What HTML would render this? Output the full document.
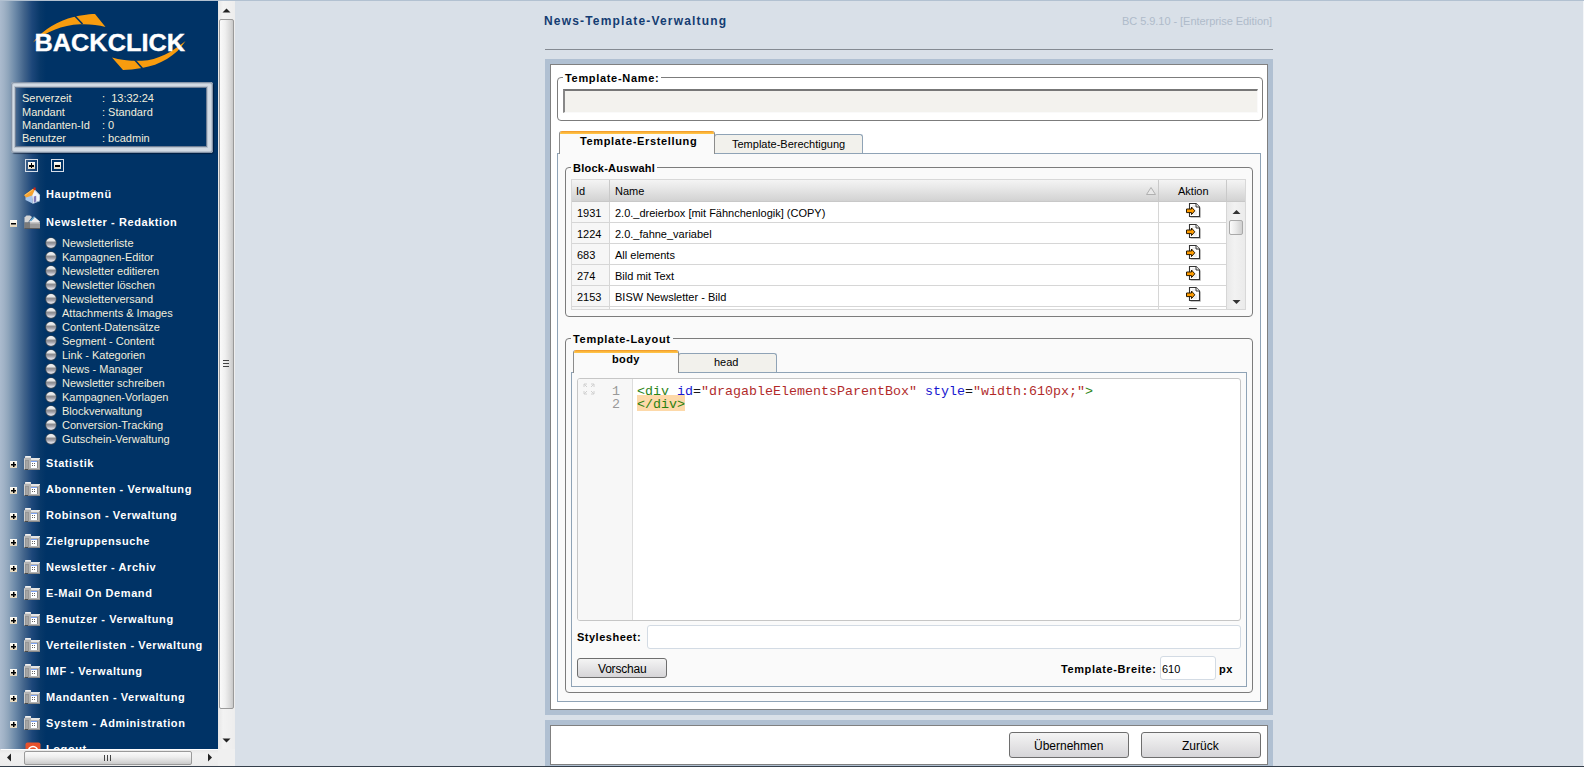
<!DOCTYPE html>
<html><head><meta charset="utf-8">
<style>
*{box-sizing:border-box}
html,body{margin:0;padding:0}
body{width:1584px;height:767px;overflow:hidden;position:relative;background:#d9e0e8;font-family:"Liberation Sans",sans-serif;font-size:11px;color:#000}
.a{position:absolute}
.t{position:absolute;white-space:nowrap;line-height:1}
/* sidebar */
#side{left:0;top:1px;width:218px;height:748px;background:linear-gradient(to right,#abbbce 0px,#a0b2c6 4px,#90a6bc 8px,#6886a6 16px,#42648b 24px,#1d477a 32px,#083869 40px,#003366 46px,#003366 218px);overflow:hidden}
.info{left:11px;top:83px;width:200px;height:70px;border:5px solid #c5ced9;border-radius:3px;box-shadow:inset 1px 1px 0 #8b9ab0, 1px 1px 0 #7c8aa0}
.si{color:#f2eedc;font-size:11px}
.tb{color:#fff;font-weight:bold;font-size:11px;letter-spacing:0.58px}
.ts{color:#f2eedc;font-size:11px}
.bul{width:10px;height:10px;border-radius:50%;background:linear-gradient(#f4f4f4 0,#e6e6e6 25%,#8e8e92 45%,#9c9ca4 60%,#d6d6de 85%,#c8c8d0 100%);box-shadow:0 0 0 0.6px #5a5448}
.pm{width:7px;height:7px;background:linear-gradient(#fffef8,#f4eee0 50%,#e2d3b6);}
.pm:before{content:"";position:absolute;left:1px;top:3px;width:5px;height:1px;background:#000;box-shadow:0 0.5px 0 #000}
.pm.p:after{content:"";position:absolute;left:3px;top:1px;width:1px;height:5px;background:#000;box-shadow:0.5px 0 0 #000}
/* main */
.frame{background:#b0c0d2}
.inner{background:#fff;border-top:1px solid #808080;border-left:1px solid #808080}
.fs{border:1px solid #7c7c7c;border-radius:4px}
.lg{font-weight:bold;background:inherit;padding:0 2px}
.btn{border:1px solid #6e6e6e;border-radius:3px;background:linear-gradient(#f4f4f4,#d6d5d8);text-align:center;font-size:12px}
</style></head><body>
<div class="a" style="left:0;top:0;width:1584px;height:1px;background:#b2c1d1"></div>

<!-- SIDEBAR -->
<svg width="0" height="0" style="position:absolute"><defs>
<symbol id="fold" viewBox="0 0 17 16" shape-rendering="crispEdges">
<rect x="1" y="0" width="6" height="3" fill="#dcdcdc"/>
<rect x="2" y="0" width="4" height="1" fill="#f2f2f2"/>
<rect x="0" y="2" width="16" height="12" fill="#b4b4b4"/>
<rect x="7" y="2" width="9" height="2" fill="#e6e6e6"/>
<rect x="0" y="3" width="1" height="11" fill="#cfcfcf"/>
<rect x="1" y="4" width="4" height="10" fill="#969696"/>
<rect x="2" y="5" width="2" height="8" fill="#a4a4a4"/>
<rect x="15" y="3" width="1" height="11" fill="#9a9a9a"/>
<rect x="0" y="13" width="16" height="1" fill="#8a8a8a"/>
<rect x="1" y="13" width="3" height="1" fill="#4a4a4a"/>
<rect x="7" y="5" width="6" height="7" fill="#ffffff"/>
<rect x="7" y="5" width="6" height="1" fill="#7ea4f4"/>
<rect x="13" y="5" width="1" height="7" fill="#8a8a8a"/>
<rect x="8" y="7" width="1" height="1" fill="#666"/><rect x="10" y="7" width="1" height="1" fill="#666"/>
<rect x="8" y="9" width="1" height="1" fill="#666"/><rect x="10" y="9" width="1" height="1" fill="#666"/>
</symbol>
<symbol id="ico" viewBox="0 0 15 16">
<path d="M4.5 14.5 L14.5 14.5 L14.5 4.5" stroke="#c4c4c4" stroke-width="1" fill="none"/>
<path d="M3.5 0.5 L10 0.5 L13.5 4 L13.5 13.5 L3.5 13.5 Z" fill="#fff" stroke="#333" stroke-width="1.1"/>
<path d="M10 0.5 L10 4 L13.5 4" fill="#f4f4f4" stroke="#333" stroke-width="1"/>
<path d="M6 3 L9 3 M8 9 L11 9 M7 11 L11 11" stroke="#d8d8d8" stroke-width="0.8"/>
<path d="M0.5 6 L5.5 6 L5.5 4 L8.8 7.8 L5.5 11.6 L5.5 9.6 L0.5 9.6 Z" fill="#ff9c00" stroke="#2a1a00" stroke-width="1"/>
</symbol>
</defs></svg>
<div id="side" class="a">
<svg class="a" style="left:0;top:-1px" width="218" height="80" viewBox="0 0 218 80">
<path d="M33 42.5 C40 33 52 24 68 18.5 C78 15.5 88 14 95 14 L105.5 27 C98 25 90 24 80 24.3 C62 25 46 32 33 42.5 Z" fill="#f89c0e"/>
<path d="M74 15 L82.5 24" stroke="#003366" stroke-width="1.6"/>
<path d="M112 57.5 C120 60 130 61 142 60.8 C158 60 172 52 185.5 41 C176 56 160 65 142 68 C135 69 128 70 123 70 Z" fill="#f89c0e"/>
<path d="M134 59 L142.5 68.5" stroke="#003366" stroke-width="1.6"/>
<text x="34.5" y="50.6" font-family="Liberation Sans" font-weight="bold" font-size="23.3" fill="#fff" stroke="#fff" stroke-width="0.35" textLength="150.5" lengthAdjust="spacingAndGlyphs">BACKCLICK</text>
</svg>
<div class="a" style="left:11px;top:81px;width:202px;height:71px;background:#d3dbe4;border-radius:3px;box-shadow:inset 0 0 0 1px #8594a8, inset 0 0 0 2px #b9c4d0, 1px 1px 1px rgba(0,10,30,.5)"></div>
<div class="a" style="left:16px;top:87px;width:190px;height:58px;background:linear-gradient(to right,#46688f 0,#1f4a7a 5px,#003366 11px);box-shadow:0 0 0 1px #6f7f96, 0 0 0 2px #b7c2ce"></div>
<div class="t si" style="left:22px;top:92px">Serverzeit</div><div class="t si" style="left:102px;top:92px">:&nbsp;&nbsp;13:32:24</div>
<div class="t si" style="left:22px;top:106px">Mandant</div><div class="t si" style="left:102px;top:106px">: Standard</div>
<div class="t si" style="left:22px;top:119px">Mandanten-Id</div><div class="t si" style="left:102px;top:119px">: 0</div>
<div class="t si" style="left:22px;top:132px">Benutzer</div><div class="t si" style="left:102px;top:132px">: bcadmin</div>
<div class="a" style="left:25px;top:158px;width:13px;height:13px;border:1px solid #d5dde8"><div class="a" style="left:2px;top:2px;width:7px;height:7px;background:linear-gradient(#fffef9,#e6dac3)"><div class="a" style="left:1px;top:3px;width:5px;height:1.5px;background:#000"></div><div class="a" style="left:2.75px;top:1px;width:1.5px;height:5px;background:#000"></div></div></div>
<div class="a" style="left:51px;top:158px;width:13px;height:13px;border:1px solid #d5dde8"><div class="a" style="left:2px;top:2px;width:7px;height:7px;background:linear-gradient(#fffef9,#e6dac3)"><div class="a" style="left:1px;top:3px;width:5px;height:1.5px;background:#000"></div></div></div>
<svg class="a" style="left:24px;top:186px" width="17" height="17" viewBox="0 0 17 17">
<path d="M1.5 8.5 L8.5 6 L8.5 16.5 L1.5 13 Z" fill="#a6c6ee"/>
<path d="M8.5 12.5 L8.5 16.5 L15.8 13.5 L15.8 8 L10.5 2.5 L8 7 Z" fill="#eef4fc"/>
<path d="M8.5 16.5 L15.8 13.5 L15.8 14.2 L8.5 17 Z" fill="#c9d8ec"/>
<path d="M9.8 9.6 L12.2 8.8 L12.2 14.6 L9.8 15.5 Z" fill="#8078b8"/>
<path d="M0 8.2 L9 1.8 L11 2.6 L8.2 8.5 L2.2 10.6 Z" fill="#f7a331"/>
<path d="M0.5 8 L9 2 L9.6 2.4 L1.2 8.6 Z" fill="#ffc766"/>
<path d="M10.6 2.6 L16.2 8.2 L15.6 8.8 L10.4 3.6 Z" fill="#c3d3e8"/>
<rect x="9.6" y="0.5" width="2" height="2.6" fill="#d9240f"/>
</svg><div class="t tb" style="left:46px;top:188px">Hauptmenü</div>
<div class="a pm" style="left:10px;top:219px"></div><svg class="a" style="left:24px;top:214px" width="17" height="15" viewBox="0 0 17 15">
<path d="M0.5 2.5 L2.5 0.5 L6 0.5 L8 2 L4 7.5 L0.5 7.5 Z" fill="#d4d4d4"/>
<path d="M5 7 L10 1.5 L16 6.5 L12 11 Z" fill="#ececec"/>
<path d="M6.5 6 L10.3 2" stroke="#55a0cc" stroke-width="1.2"/>
<path d="M0.5 7.5 L16 7.5 L16 13.5 L0.5 13.5 Z" fill="#9a9a9a"/>
<path d="M0.5 7.5 L6 7.5 L6 13.5 L0.5 13.5 Z" fill="#7a7a7a"/>
<path d="M0.5 13 L16 13 L16 14 L0.5 14 Z" fill="#5a5a5a"/>
<path d="M6 7.5 L16 7.5 L16 8.5 L6 8.5 Z" fill="#c8c8c8"/>
</svg><div class="t tb" style="left:46px;top:216px">Newsletter - Redaktion</div>
<div class="a bul" style="left:46px;top:237px"></div><div class="t ts" style="left:62px;top:237px">Newsletterliste</div>
<div class="a bul" style="left:46px;top:251px"></div><div class="t ts" style="left:62px;top:251px">Kampagnen-Editor</div>
<div class="a bul" style="left:46px;top:265px"></div><div class="t ts" style="left:62px;top:265px">Newsletter editieren</div>
<div class="a bul" style="left:46px;top:279px"></div><div class="t ts" style="left:62px;top:279px">Newsletter löschen</div>
<div class="a bul" style="left:46px;top:293px"></div><div class="t ts" style="left:62px;top:293px">Newsletterversand</div>
<div class="a bul" style="left:46px;top:307px"></div><div class="t ts" style="left:62px;top:307px">Attachments &amp; Images</div>
<div class="a bul" style="left:46px;top:321px"></div><div class="t ts" style="left:62px;top:321px">Content-Datensätze</div>
<div class="a bul" style="left:46px;top:335px"></div><div class="t ts" style="left:62px;top:335px">Segment - Content</div>
<div class="a bul" style="left:46px;top:349px"></div><div class="t ts" style="left:62px;top:349px">Link - Kategorien</div>
<div class="a bul" style="left:46px;top:363px"></div><div class="t ts" style="left:62px;top:363px">News - Manager</div>
<div class="a bul" style="left:46px;top:377px"></div><div class="t ts" style="left:62px;top:377px">Newsletter schreiben</div>
<div class="a bul" style="left:46px;top:391px"></div><div class="t ts" style="left:62px;top:391px">Kampagnen-Vorlagen</div>
<div class="a bul" style="left:46px;top:405px"></div><div class="t ts" style="left:62px;top:405px">Blockverwaltung</div>
<div class="a bul" style="left:46px;top:419px"></div><div class="t ts" style="left:62px;top:419px">Conversion-Tracking</div>
<div class="a bul" style="left:46px;top:433px"></div><div class="t ts" style="left:62px;top:433px">Gutschein-Verwaltung</div>
<div class="a pm p" style="left:10px;top:460px"></div><svg class="a" style="left:24px;top:455px" width="17" height="16"><use href="#fold"/></svg><div class="t tb" style="left:46px;top:457px">Statistik</div>
<div class="a pm p" style="left:10px;top:486px"></div><svg class="a" style="left:24px;top:481px" width="17" height="16"><use href="#fold"/></svg><div class="t tb" style="left:46px;top:483px">Abonnenten - Verwaltung</div>
<div class="a pm p" style="left:10px;top:512px"></div><svg class="a" style="left:24px;top:507px" width="17" height="16"><use href="#fold"/></svg><div class="t tb" style="left:46px;top:509px">Robinson - Verwaltung</div>
<div class="a pm p" style="left:10px;top:538px"></div><svg class="a" style="left:24px;top:533px" width="17" height="16"><use href="#fold"/></svg><div class="t tb" style="left:46px;top:535px">Zielgruppensuche</div>
<div class="a pm p" style="left:10px;top:564px"></div><svg class="a" style="left:24px;top:559px" width="17" height="16"><use href="#fold"/></svg><div class="t tb" style="left:46px;top:561px">Newsletter - Archiv</div>
<div class="a pm p" style="left:10px;top:590px"></div><svg class="a" style="left:24px;top:585px" width="17" height="16"><use href="#fold"/></svg><div class="t tb" style="left:46px;top:587px">E-Mail On Demand</div>
<div class="a pm p" style="left:10px;top:616px"></div><svg class="a" style="left:24px;top:611px" width="17" height="16"><use href="#fold"/></svg><div class="t tb" style="left:46px;top:613px">Benutzer - Verwaltung</div>
<div class="a pm p" style="left:10px;top:642px"></div><svg class="a" style="left:24px;top:637px" width="17" height="16"><use href="#fold"/></svg><div class="t tb" style="left:46px;top:639px">Verteilerlisten - Verwaltung</div>
<div class="a pm p" style="left:10px;top:668px"></div><svg class="a" style="left:24px;top:663px" width="17" height="16"><use href="#fold"/></svg><div class="t tb" style="left:46px;top:665px">IMF - Verwaltung</div>
<div class="a pm p" style="left:10px;top:694px"></div><svg class="a" style="left:24px;top:689px" width="17" height="16"><use href="#fold"/></svg><div class="t tb" style="left:46px;top:691px">Mandanten - Verwaltung</div>
<div class="a pm p" style="left:10px;top:720px"></div><svg class="a" style="left:24px;top:715px" width="17" height="16"><use href="#fold"/></svg><div class="t tb" style="left:46px;top:717px">System - Administration</div>
<svg class="a" style="left:25px;top:741px" width="16" height="16" viewBox="0 0 16 16"><rect x="0.5" y="0.5" width="15" height="15" rx="2" fill="#e8522c"/><circle cx="8" cy="9" r="4.5" fill="none" stroke="#fff" stroke-width="1.6"/></svg><div class="t tb" style="left:46px;top:743px">Logout</div>
</div>


<!-- sidebar scrollbars -->
<div class="a" style="left:218px;top:1px;width:17px;height:748px;background:linear-gradient(to right,#e6e6e6,#f3f3f3 30%,#ededed)"></div>
<svg class="a" style="left:218px;top:5px" width="17" height="10" viewBox="0 0 17 10"><path d="M4.5 7.5 L8.5 3.5 L12.5 7.5 Z" fill="#222"/></svg>
<div class="a" style="left:219px;top:19px;width:15px;height:690px;border:1px solid #9a9a9a;border-radius:2px;background:linear-gradient(to right,#fafafa,#efefef 40%,#d8d8d8 80%,#c8c8c8)"></div>
<div class="a" style="left:223px;top:360px;width:6px;height:1px;background:#444"></div>
<div class="a" style="left:223px;top:363px;width:6px;height:1px;background:#444"></div>
<div class="a" style="left:223px;top:366px;width:6px;height:1px;background:#444"></div>
<svg class="a" style="left:218px;top:736px" width="17" height="10" viewBox="0 0 17 10"><path d="M4.5 2.5 L12.5 2.5 L8.5 6.5 Z" fill="#222"/></svg>
<div class="a" style="left:0;top:749px;width:235px;height:17px;background:linear-gradient(#e6e6e6,#f1f1f1 30%,#ececec)"></div>
<div class="a" style="left:218px;top:749px;width:17px;height:17px;background:#f0f0f0"></div>
<div class="a" style="left:1px;top:749px;width:217px;height:1px;background:#fff"></div>
<svg class="a" style="left:2px;top:749px" width="12" height="17" viewBox="0 0 12 17"><path d="M9 4.5 L9 12.5 L5 8.5 Z" fill="#222"/></svg>
<div class="a" style="left:24px;top:751px;width:168px;height:14px;border:1px solid #9a9a9a;border-radius:2px;background:linear-gradient(#fafafa,#efefef 40%,#d8d8d8 80%,#cacaca)"></div>
<div class="a" style="left:104px;top:755px;width:1px;height:6px;background:#444"></div>
<div class="a" style="left:107px;top:755px;width:1px;height:6px;background:#444"></div>
<div class="a" style="left:110px;top:755px;width:1px;height:6px;background:#444"></div>
<svg class="a" style="left:204px;top:749px" width="12" height="17" viewBox="0 0 12 17"><path d="M4 4.5 L8 8.5 L4 12.5 Z" fill="#222"/></svg>
<!-- MAIN -->
<div class="t" style="left:544px;top:15px;font-weight:bold;font-size:12px;letter-spacing:1.17px;color:#143c72">News-Template-Verwaltung</div>
<div class="t" style="left:1122px;top:16px;color:#afbbca;letter-spacing:-0.05px">BC 5.9.10 - [Enterprise Edition]</div>
<div class="a" style="left:545px;top:49px;width:728px;height:1px;background:#848a92"></div>

<div class="a frame" style="left:545px;top:59px;width:728px;height:656px"></div>
<div class="a inner" style="left:550px;top:64px;width:718px;height:646px;border-right:1px solid #808080;border-bottom:1px solid #808080"></div>

<div class="a frame" style="left:545px;top:720px;width:728px;height:47px"></div>
<div class="a inner" style="left:550px;top:725px;width:718px;height:40px;border-bottom:1px solid #808080;border-right:1px solid #808080"></div>
<!-- Template-Name fieldset -->
<div class="a fs" style="left:557px;top:77px;width:706px;height:44px;background:#fff"></div>
<div class="t lg" style="left:563px;top:73px;background:#fff;letter-spacing:0.68px">Template-Name:</div>
<div class="a" style="left:563px;top:89px;width:695px;height:24px;background:#f3f2ee;border-top:2px solid #777;border-left:2px solid #888;border-bottom:1px solid #fafafa;border-right:1px solid #fafafa"></div>

<!-- tabs -->
<div class="a" style="left:557px;top:153px;width:704px;height:549px;background:#fafafa;border:1px solid #8fa3b6"></div>
<div class="a" style="left:714px;top:134px;width:149px;height:19px;background:#f2f1ec;border:1px solid #8fa3b6;border-left-color:#8c8c8c;border-bottom:none;border-radius:3px 3px 0 0"></div>
<div class="t" style="left:732px;top:139px">Template-Berechtigung</div>
<div class="a" style="left:559px;top:131px;width:156px;height:23px;background:#fafafa;border-left:1px solid #8c8c8c;border-right:1px solid #8c8c8c;border-radius:3px 3px 0 0;overflow:hidden"><div class="a" style="left:-1px;top:0;width:156px;height:3px;background:linear-gradient(#ee9528,#fbb43a 50%,#ffc84a)"></div></div>
<div class="t" style="left:580px;top:136px;font-weight:bold;letter-spacing:0.65px">Template-Erstellung</div>

<!-- Block-Auswahl -->
<div class="a fs" style="left:565px;top:167px;width:688px;height:150px"></div>
<div class="t lg" style="left:571px;top:163px;background:#fafafa;letter-spacing:0.25px">Block-Auswahl</div>
<div class="a" style="left:571px;top:179px;width:675px;height:131px;background:#fff;border:1px solid #d8d8d8;overflow:hidden">
<div class="a" style="left:0;top:0;width:674px;height:22px;background:linear-gradient(#f4f4f4,#e7e7e7 40%,#d2d2d2);border-bottom:1px solid #c8c8c8"></div>
<div class="a" style="left:37px;top:0;width:1px;height:22px;background:#c9c9c9"></div>
<div class="a" style="left:586px;top:0;width:1px;height:22px;background:#c9c9c9"></div>
<div class="a" style="left:654px;top:0;width:1px;height:22px;background:#c9c9c9"></div>
<div class="t" style="left:4px;top:6px">Id</div>
<div class="t" style="left:43px;top:6px">Name</div>
<div class="t" style="left:606px;top:6px">Aktion</div>
<svg class="a" style="left:574px;top:7px" width="10" height="8" viewBox="0 0 10 8"><path d="M5 0.5 L9.5 7.5 L0.5 7.5 Z" fill="#e8e8e8" stroke="#b0b0b0" stroke-width="1"/></svg>
<div class="a" style="left:0;top:22px;width:37px;height:20px;background:#f6f6f6"></div>
<div class="a" style="left:0;top:42px;width:654px;height:1px;background:#d6d6d6"></div>
<div class="a" style="left:37px;top:22px;width:1px;height:21px;background:#d6d6d6"></div>
<div class="a" style="left:586px;top:22px;width:1px;height:21px;background:#d6d6d6"></div>
<div class="a" style="left:654px;top:22px;width:1px;height:21px;background:#d6d6d6"></div>
<div class="t" style="left:5px;top:28px">1931</div>
<div class="t" style="left:43px;top:28px">2.0._dreierbox [mit Fähnchenlogik] (COPY)</div>
<svg class="a" style="left:614px;top:23px" width="15" height="16"><use href="#ico"/></svg>
<div class="a" style="left:0;top:43px;width:37px;height:20px;background:#f6f6f6"></div>
<div class="a" style="left:0;top:63px;width:654px;height:1px;background:#d6d6d6"></div>
<div class="a" style="left:37px;top:43px;width:1px;height:21px;background:#d6d6d6"></div>
<div class="a" style="left:586px;top:43px;width:1px;height:21px;background:#d6d6d6"></div>
<div class="a" style="left:654px;top:43px;width:1px;height:21px;background:#d6d6d6"></div>
<div class="t" style="left:5px;top:49px">1224</div>
<div class="t" style="left:43px;top:49px">2.0._fahne_variabel</div>
<svg class="a" style="left:614px;top:44px" width="15" height="16"><use href="#ico"/></svg>
<div class="a" style="left:0;top:64px;width:37px;height:20px;background:#f6f6f6"></div>
<div class="a" style="left:0;top:84px;width:654px;height:1px;background:#d6d6d6"></div>
<div class="a" style="left:37px;top:64px;width:1px;height:21px;background:#d6d6d6"></div>
<div class="a" style="left:586px;top:64px;width:1px;height:21px;background:#d6d6d6"></div>
<div class="a" style="left:654px;top:64px;width:1px;height:21px;background:#d6d6d6"></div>
<div class="t" style="left:5px;top:70px">683</div>
<div class="t" style="left:43px;top:70px">All elements</div>
<svg class="a" style="left:614px;top:65px" width="15" height="16"><use href="#ico"/></svg>
<div class="a" style="left:0;top:85px;width:37px;height:20px;background:#f6f6f6"></div>
<div class="a" style="left:0;top:105px;width:654px;height:1px;background:#d6d6d6"></div>
<div class="a" style="left:37px;top:85px;width:1px;height:21px;background:#d6d6d6"></div>
<div class="a" style="left:586px;top:85px;width:1px;height:21px;background:#d6d6d6"></div>
<div class="a" style="left:654px;top:85px;width:1px;height:21px;background:#d6d6d6"></div>
<div class="t" style="left:5px;top:91px">274</div>
<div class="t" style="left:43px;top:91px">Bild mit Text</div>
<svg class="a" style="left:614px;top:86px" width="15" height="16"><use href="#ico"/></svg>
<div class="a" style="left:0;top:106px;width:37px;height:20px;background:#f6f6f6"></div>
<div class="a" style="left:0;top:126px;width:654px;height:1px;background:#d6d6d6"></div>
<div class="a" style="left:37px;top:106px;width:1px;height:21px;background:#d6d6d6"></div>
<div class="a" style="left:586px;top:106px;width:1px;height:21px;background:#d6d6d6"></div>
<div class="a" style="left:654px;top:106px;width:1px;height:21px;background:#d6d6d6"></div>
<div class="t" style="left:5px;top:112px">2153</div>
<div class="t" style="left:43px;top:112px">BISW Newsletter - Bild</div>
<svg class="a" style="left:614px;top:107px" width="15" height="16"><use href="#ico"/></svg>
<div class="a" style="left:0;top:127px;width:37px;height:20px;background:#f6f6f6"></div>
<div class="a" style="left:0;top:147px;width:654px;height:1px;background:#d6d6d6"></div>
<div class="a" style="left:37px;top:127px;width:1px;height:21px;background:#d6d6d6"></div>
<div class="a" style="left:586px;top:127px;width:1px;height:21px;background:#d6d6d6"></div>
<div class="a" style="left:654px;top:127px;width:1px;height:21px;background:#d6d6d6"></div>
<svg class="a" style="left:614px;top:128px" width="15" height="16"><use href="#ico"/></svg>
<div class="a" style="left:655px;top:22px;width:19px;height:110px;background:linear-gradient(to right,#e9e9e9,#f2f2f2 40%,#eaeaea)"></div>
<svg class="a" style="left:655px;top:27px" width="19" height="10" viewBox="0 0 19 10"><path d="M5.5 7 L9.5 3 L13.5 7 Z" fill="#333"/></svg>
<div class="a" style="left:657px;top:40px;width:14px;height:15px;border:1px solid #a9a9a9;border-radius:2px;background:linear-gradient(to right,#fbfbfb,#e9e9e9 50%,#cfcfcf)"></div>
<svg class="a" style="left:655px;top:117px" width="19" height="10" viewBox="0 0 19 10"><path d="M5.5 3 L13.5 3 L9.5 7 Z" fill="#333"/></svg>
</div>

<!-- Template-Layout -->
<div class="a fs" style="left:565px;top:338px;width:688px;height:355px"></div>
<div class="t lg" style="left:571px;top:334px;background:#fafafa;letter-spacing:0.7px">Template-Layout</div>
<div class="a" style="left:571px;top:372px;width:676px;height:315px;background:#fafafa;border:1px solid #8fa3b6"></div>
<div class="a" style="left:678px;top:353px;width:99px;height:19px;background:#f2f1ec;border:1px solid #8fa3b6;border-left-color:#8c8c8c;border-bottom:none;border-radius:3px 3px 0 0"></div>
<div class="t" style="left:714px;top:357px">head</div>
<div class="a" style="left:573px;top:350px;width:106px;height:23px;background:#fafafa;border-left:1px solid #8c8c8c;border-right:1px solid #8c8c8c;border-radius:3px 3px 0 0;overflow:hidden"><div class="a" style="left:-1px;top:0;width:106px;height:3px;background:linear-gradient(#ee9528,#fbb43a 50%,#ffc84a)"></div></div>
<div class="t" style="left:612px;top:354px;font-weight:bold;letter-spacing:0.4px">body</div>

<!-- editor -->
<div class="a" style="left:577px;top:378px;width:664px;height:243px;background:#fff;border:1px solid #c6c6c6;border-radius:3px;overflow:hidden">
  <div class="a" style="left:0;top:0;width:55px;height:241px;background:#f7f7f7;border-right:1px solid #dddddd"></div>
</div>
<svg class="a" style="left:583px;top:383px" width="12" height="12" viewBox="0 0 12 12"><path d="M1 1h3M1 1v3M1 1l3 3M11 1h-3M11 1v3M11 1l-3 3M1 11h3M1 11v-3M1 11l3-3M11 11h-3M11 11v-3M11 11l-3-3" stroke="#d0d0d0" stroke-width="1" fill="none"/></svg>
<div class="a" style="left:637px;top:395px;width:48px;height:16px;background:#fdd9a9"></div>
<div class="t" style="left:612px;top:385px;font-family:'Liberation Mono',monospace;font-size:13.33px;color:#999">1</div>
<div class="t" style="left:612px;top:398px;font-family:'Liberation Mono',monospace;font-size:13.33px;color:#999">2</div>
<div class="t" style="left:637px;top:385px;font-family:'Liberation Mono',monospace;font-size:13.33px;opacity:.9"><span style="color:#117700">&lt;div</span> <span style="color:#0000cc">id</span>=<span style="color:#aa1111">"dragableElementsParentBox"</span> <span style="color:#0000cc">style</span>=<span style="color:#aa1111">"width:610px;"</span><span style="color:#117700">&gt;</span></div>
<div class="t" style="left:637px;top:398px;font-family:'Liberation Mono',monospace;font-size:13.33px;opacity:.9"><span style="color:#117700">&lt;/div&gt;</span></div>

<!-- stylesheet -->
<div class="t" style="left:577px;top:632px;font-weight:bold;letter-spacing:0.5px">Stylesheet:</div>
<div class="a" style="left:647px;top:625px;width:594px;height:24px;background:#fff;border:1px solid #d3dbe4;border-radius:3px"></div>
<div class="a btn" style="left:577px;top:658px;width:90px;height:20px"></div>
<div class="t" style="left:598px;top:663px;font-size:12px;letter-spacing:-0.2px">Vorschau</div>
<div class="t" style="left:1061px;top:664px;font-weight:bold;letter-spacing:0.6px">Template-Breite:</div>
<div class="a" style="left:1160px;top:656px;width:56px;height:24px;background:#fff;border:1px solid #d3dbe4;border-radius:3px"></div>
<div class="t" style="left:1162px;top:664px">610</div>
<div class="t" style="left:1219px;top:664px;font-weight:bold;letter-spacing:0.5px">px</div>

<!-- buttons -->
<div class="a btn" style="left:1009px;top:732px;width:120px;height:26px"></div>
<div class="t" style="left:1034px;top:740px;font-size:12px">Übernehmen</div>
<div class="a btn" style="left:1141px;top:732px;width:120px;height:26px"></div>
<div class="t" style="left:1182px;top:740px;font-size:12px">Zurück</div>



<div class="a" style="left:1583px;top:1px;width:1px;height:765px;background:#f4f6f8"></div>
<div class="a" style="left:0;top:766px;width:1584px;height:1px;background:#353f4b"></div>
</body></html>
